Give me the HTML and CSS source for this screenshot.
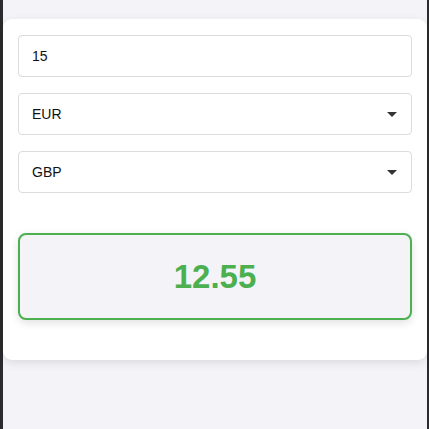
FILE: index.html
```html
<!DOCTYPE html>
<html>
<head>
<meta charset="utf-8">
<link rel="stylesheet" href="styles.css">
</head>
<body>
<div class="frame">
  <div class="card">
    <div class="field"><span class="value">15</span></div>
    <div class="field select"><span class="value">EUR</span><span class="caret"></span></div>
    <div class="field select"><span class="value">GBP</span><span class="caret"></span></div>
    <div class="result">12.55</div>
  </div>
</div>
</body>
</html>
```
FILE: styles.css
```css
html, body {
  margin: 0;
  padding: 0;
  height: 100%;
}
body {
  background: #2b2b2e;
  font-family: "Liberation Sans", Arial, sans-serif;
}
.frame {
  margin-left: 3px;
  margin-right: 2px;
  height: 100%;
  background: #f4f4f8;
  padding-top: 19px;
  box-sizing: border-box;
}
.card {
  background: #fff;
  border-radius: 9px;
  box-shadow: 0 3px 10px rgba(0,0,0,0.1);
  padding: 16px 15px 40px;
  display: flex;
  flex-direction: column;
  gap: 16px;
}
.field {
  height: 42px;
  box-sizing: border-box;
  border: 1px solid #dcdcdc;
  border-radius: 4px;
  padding: 0 13px;
  display: flex;
  align-items: center;
  justify-content: space-between;
  font-size: 14px;
  color: #111;
}
.caret {
  width: 0;
  height: 0;
  border-left: 5px solid transparent;
  border-right: 5px solid transparent;
  border-top: 5px solid #333;
  margin-right: 1px;
}
.result {
  margin-top: 24px;
  height: 87px;
  box-sizing: border-box;
  border: 2px solid #4caf50;
  border-radius: 8px;
  background: #f4f4f8;
  box-shadow: 0 3px 8px rgba(0,0,0,0.12);
  display: flex;
  align-items: center;
  justify-content: center;
  color: #4caf50;
  font-weight: bold;
  font-size: 33px;
}
```
